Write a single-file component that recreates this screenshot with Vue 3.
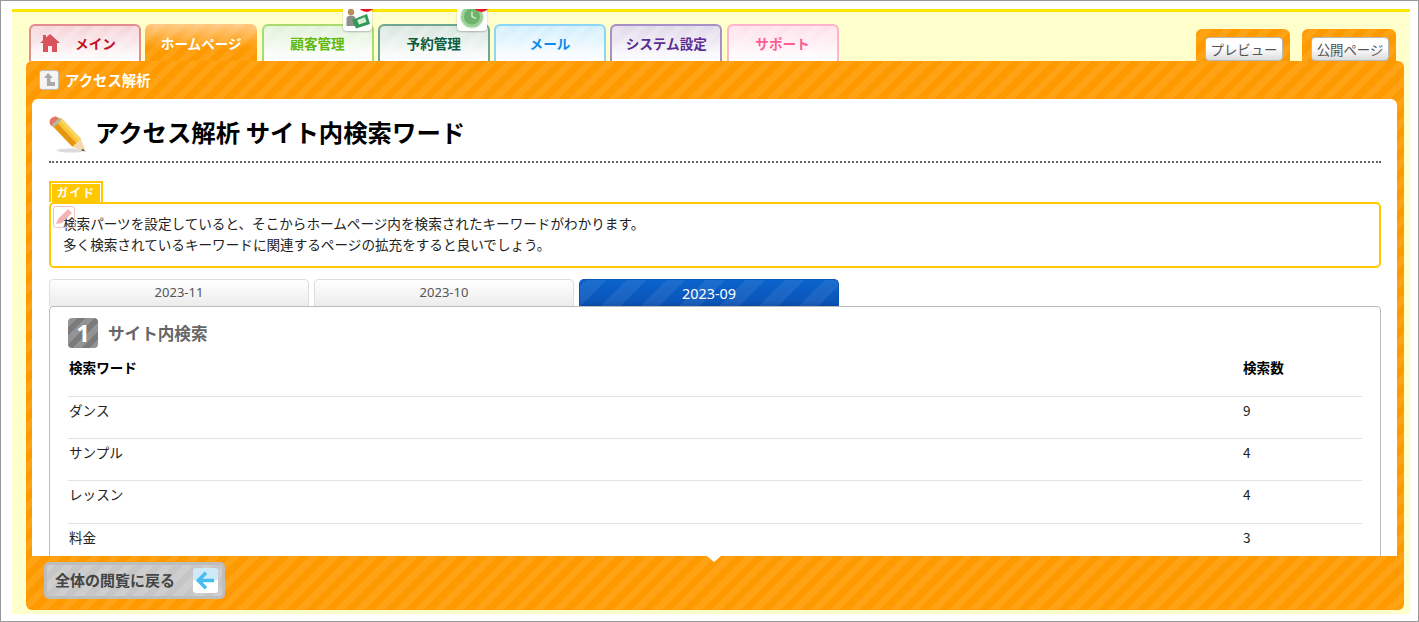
<script setup>
const tabs = [
  { key: 'main', label: 'メイン' },
  { key: 'home', label: 'ホームページ' },
  { key: 'customer', label: '顧客管理' },
  { key: 'reserve', label: '予約管理' },
  { key: 'mail', label: 'メール' },
  { key: 'system', label: 'システム設定' },
  { key: 'support', label: 'サポート' },
]
const months = [
  { label: '2023-11', active: false },
  { label: '2023-10', active: false },
  { label: '2023-09', active: true },
]
const rows = [
  { word: 'ダンス', count: 9 },
  { word: 'サンプル', count: 4 },
  { word: 'レッスン', count: 4 },
  { word: '料金', count: 3 },
]
</script>

<template>
  <div class="frame">
    <div class="page">
      <nav class="nav">
        <div class="tabs">
          <a v-for="t in tabs" :key="t.key" class="tab" :class="'tab-' + t.key">
            <svg v-if="t.key === 'main'" class="home-ico" viewBox="0 0 20 20" width="20" height="20">
              <path fill="#d9535c" d="M10 1 L20 10 L17 10 L17 19 L12 19 L12 13 L8 13 L8 19 L3 19 L3 10 L0 10 L3 7.300 L3 2 L6 2 L6 4.600 Z" />
            </svg>
            <span>{{ t.label }}</span>
            <span v-if="t.key === 'customer'" class="float-ico">
              <svg viewBox="0 0 29 22" width="29" height="22">
                <circle cx="8" cy="3" r="3.200" fill="#b98a5a" />
                <path fill="#8d9089" d="M3.500 17 V10 Q3.500 6.500 8 6.500 Q12.500 6.500 12.500 10 V17 Z" />
                <path fill="#2f9a58" d="M9 11 L24 5 L27 15 L13 19.500 Z" />
                <path fill="#bfe5bd" d="M14 11 L22 8 L23.500 13 L16 15.500 Z" />
                <path stroke="#fff" stroke-width=".8" d="M15 12.500 L22 10 M16 14.300 L23 11.800" />
              </svg>
            </span>
            <span v-if="t.key === 'reserve'" class="float-ico float-ico-clock">
              <svg viewBox="0 0 30 22" width="30" height="22">
                <circle cx="15" cy="7.500" r="11.500" fill="#9bd199" stroke="#d5ecd3" stroke-width="1.200" />
                <circle cx="15" cy="7.500" r="8" fill="#6cb46b" />
                <path d="M15 2.500 V7.500 L19 9.500" fill="none" stroke="#e3f3e2" stroke-width="1.300" />
              </svg>
            </span>
            <i v-if="t.key === 'customer' || t.key === 'reserve'" class="dot"></i>
          </a>
        </div>
        <div class="side-tabs">
          <div class="side-tab"><button class="side-btn">プレビュー</button></div>
          <div class="side-tab"><button class="side-btn">公開ページ</button></div>
        </div>
      </nav>

      <section class="panel">
        <header class="crumb">
          <span class="up-ico">
            <svg viewBox="0 0 18 18" width="18" height="18">
              <path fill="#a9a9a9" d="M8 2 L13 7 L10.500 7 L10.500 11 L15 11 L15 15 L7 15 L7 7 L4 7 Z" />
            </svg>
          </span>
          <span>アクセス解析</span>
        </header>

        <main class="sheet">
          <h1 class="title">
            <svg class="pencil" viewBox="0 0 38 37" width="38" height="37">
              <ellipse cx="22" cy="34.500" rx="14" ry="2" fill="#ccc" opacity=".7" />
              <path fill="#e8950f" d="M3.500 10 L12 2 L32 23 L23.500 31 Z" />
              <path fill="#fbc63a" d="M7.500 6.300 L12 2 L32 23 L27.500 27.200 Z" />
              <path fill="#f9d765" d="M10 4 L12 2 L32 23 L30 25 Z" />
              <path fill="#e5775a" d="M1.500 9 Q-.500 6 1.500 3 Q4 0 7 .5 Q9 1 11 3 L4.500 11 Z" />
              <path fill="#b9b6a8" d="M2.800 8.800 L10.200 1.700 L12.500 3.800 L5 11.200 Z" />
              <path fill="#f3d9ad" d="M23.500 31 L32 23 L36.500 35.500 Z" />
              <path fill="#3c3c3c" d="M33.500 32.800 L36.500 35.500 L32.300 34.200 Z" />
            </svg>
            <span>アクセス解析 サイト内検索ワード</span>
          </h1>

          <div class="guide-tag"><span>ガイド</span></div>
          <div class="guide-box">
            <span class="guide-ico">
              <svg viewBox="0 0 22 22" width="22" height="22">
                <path fill="#f3b3b3" d="M5 13 L15 3 L19 7 L9 17 L3 18 Z" />
              </svg>
            </span>
            <p>検索パーツを設定していると、そこからホームページ内を検索されたキーワードがわかります。</p>
            <p>多く検索されているキーワードに関連するページの拡充をすると良いでしょう。</p>
          </div>

          <div class="months">
            <a v-for="m in months" :key="m.label" class="month" :class="{ active: m.active }">{{ m.label }}</a>
          </div>

          <div class="result">
            <h2 class="heading">
              <span class="num">1</span>
              <span>サイト内検索</span>
            </h2>
            <div class="row row-head">
              <span>検索ワード</span>
              <span>検索数</span>
            </div>
            <div v-for="r in rows" :key="r.word" class="row">
              <span>{{ r.word }}</span>
              <span>{{ r.count }}</span>
            </div>
          </div>
        </main>

        <footer class="foot">
          <i class="notch"></i>
          <a class="back">
            <span>全体の閲覧に戻る</span>
            <span class="back-ico">
              <svg viewBox="0 0 26 26" width="25" height="25">
                <path fill="none" stroke="#45bdf0" stroke-width="3.600" d="M22 13 H6 M13.500 5 L5.500 13 L13.500 21" />
              </svg>
            </span>
          </a>
        </footer>
      </section>
    </div>
  </div>
</template>

<style>
html, body { margin: 0; padding: 0; background: #fff; }
</style>

<style scoped>
.frame {
  width: 1419px;
  height: 622px;
  box-sizing: border-box;
  border: 1px solid #999;
  padding: 8px 8px 7px 11px;
  background: #fff;
  font-family: "Noto Sans CJK JP", "Noto Sans", sans-serif;
  overflow: hidden;
}
.page {
  height: 100%;
  box-sizing: border-box;
  position: relative;
  overflow: hidden;
  background: linear-gradient(#ffe600 3px, #ffffcc 3px);
  padding: 15px 6px 4px 14px;
  display: flex;
  flex-direction: column;
}
.nav {
  height: 37px;
  flex: none;
  display: flex;
  justify-content: space-between;
  align-items: flex-end;
  padding: 0 8px 0 3px;
}
.tabs { display: flex; gap: 4.25px; height: 37px; }
.tab {
  position: relative;
  width: 112px;
  box-sizing: border-box;
  border: 2px solid;
  border-bottom: 0;
  border-radius: 6px 6px 0 0;
  display: flex;
  align-items: center;
  justify-content: center;
  font-size: 13.6px;
  font-weight: 700;
  padding-bottom: 2px;
  --top: #eee;
  background:
    repeating-linear-gradient(-45deg, rgba(255,255,255,0) 0 7px, rgba(255,255,255,.18) 7px 14px),
    linear-gradient(var(--top), #fff);
}
.tab-main { border-color: #e28d90; color: #c4101e; --top: #f5d3d8; gap: 15px; padding-right: 14px; }
.tab-home {
  border-color: transparent;
  color: #fff;
  background:
    repeating-linear-gradient(-45deg, rgba(255,255,255,0) 0 7px, rgba(255,255,255,.08) 7px 14px) border-box,
    linear-gradient(#ffc983, #ff9900 65%) border-box;
}
.tab-customer { border-color: #a9dc6f; color: #62b80a; --top: #e2f2da; }
.tab-reserve { border-color: #6ea78f; color: #0c5c3b; --top: #d8e5df; }
.tab-mail { border-color: #8dd5f6; color: #0b8ae8; --top: #d2eefd; }
.tab-system { border-color: #a88fc7; color: #5b2e92; --top: #e0d8ea; }
.tab-support { border-color: #ffb4ca; color: #ff5b92; --top: #ffe0ea; }
.home-ico { flex: none; }
.float-ico {
  position: absolute;
  right: 0;
  top: -17px;
  width: 29px;
  height: 22px;
  background: #fff;
  border-radius: 0 0 4px 4px;
  box-shadow: 0 1px 2px rgba(0,0,0,.25);
  overflow: hidden;
}
.float-ico svg { display: block; }
.float-ico-clock { right: 1px; width: 30px; }
.dot {
  position: absolute;
  right: -3px;
  top: -31px;
  width: 17px;
  height: 17px;
  border-radius: 50%;
  background: #e8121e;
}
.tab-reserve .dot { right: -2px; }
.side-tabs { display: flex; gap: 12px; }
.side-tab {
  width: 94px;
  height: 32px;
  box-sizing: border-box;
  padding: 8px 0 0 2px;
  display: flex;
  justify-content: center;
  border-radius: 6px 6px 0 0;
  background: repeating-linear-gradient(-45deg, #ff9900 0 7px, #ffa214 7px 14px);
}
.side-btn {
  width: 78px;
  height: 24px;
  box-sizing: border-box;
  padding: 0;
  border: 1px solid #b9b9b9;
  border-radius: 4px;
  background: linear-gradient(#fff, #fff 45%, #dcdcdc);
  color: #555;
  font-family: inherit;
  font-size: 13.4px;
  line-height: 20px;
}
.panel {
  flex: 1;
  min-height: 0;
  display: flex;
  flex-direction: column;
  border-radius: 6px;
  background: repeating-linear-gradient(-45deg, #ff9900 0 7px, #ffa214 7px 14px);
}
.crumb {
  height: 38px;
  flex: none;
  box-sizing: border-box;
  padding: 0 0 1px 13px;
  display: flex;
  align-items: center;
  gap: 6px;
  color: #fff;
  font-size: 14.4px;
  font-weight: 700;
}
.up-ico {
  width: 20px;
  height: 20px;
  box-sizing: border-box;
  border: 1px solid #bcbcbc;
  border-radius: 3px;
  background: #f4f4f4;
  display: flex;
  align-items: center;
  justify-content: center;
}
.sheet {
  flex: 1;
  min-height: 0;
  margin: 0 7px 0 6px;
  padding: 0 16px 0 17px;
  background: #fff;
  border-radius: 6px 6px 0 0;
  overflow: hidden;
}
.title {
  margin: 0;
  height: 64px;
  box-sizing: border-box;
  padding-top: 17px;
  border-bottom: 2px dotted #666;
  display: flex;
  align-items: flex-start;
  gap: 8px;
  font-size: 24.4px;
  font-weight: 700;
  line-height: 32px;
  color: #000;
}
.pencil { flex: none; }
.guide-tag {
  margin-top: 18px;
  width: 54px;
  height: 21px;
  box-sizing: border-box;
  border: 2px solid #ffc800;
  border-bottom: 0;
  padding: 1px 1px 0;
  display: flex;
}
.guide-tag span {
  flex: 1;
  background: #ffc800;
  color: #fff;
  font-size: 11.5px;
  font-weight: 700;
  letter-spacing: 1.5px;
  line-height: 16px;
  text-align: center;
}
.guide-box {
  position: relative;
  height: 66px;
  box-sizing: border-box;
  border: 2px solid #ffc800;
  border-radius: 5px;
  padding: 9px 12px 0;
  font-size: 13.6px;
  line-height: 21px;
  color: #222;
}
.guide-box p { margin: 0; }
.guide-ico {
  position: absolute;
  left: 2px;
  top: 2px;
  width: 22px;
  height: 22px;
  box-sizing: border-box;
  border: 1px solid #f1c4c4;
  border-radius: 3px;
  display: block;
}
.guide-ico svg { display: block; margin: -1px; }
.months { display: flex; gap: 5px; margin-top: 11px; }
.month {
  width: 260px;
  height: 27px;
  box-sizing: border-box;
  border: 1px solid #ddd;
  border-bottom: 0;
  border-radius: 5px 5px 0 0;
  background: linear-gradient(#fff, #ececec);
  color: #555;
  font-family: "Noto Sans", sans-serif;
  font-size: 13px;
  line-height: 25px;
  text-align: center;
}
.month.active {
  border-color: #0a55b8;
  color: #fff;
  font-size: 14.4px;
  line-height: 28px;
  background:
    repeating-linear-gradient(-45deg, rgba(255,255,255,0) 0 14px, rgba(255,255,255,.07) 14px 28px),
    linear-gradient(#0a63cc, #0a56bb 80%, #084aa5);
}
.result {
  border: 1px solid #bbb;
  border-radius: 4px 4px 0 0;
  padding: 11px 18px 0;
}
.heading {
  margin: 0 0 5px;
  display: flex;
  align-items: center;
  gap: 10px;
  font-size: 16.6px;
  font-weight: 700;
  line-height: 30px;
  color: #666;
}
.num {
  width: 30px;
  height: 30px;
  border-radius: 4px;
  background: repeating-linear-gradient(-45deg, #939393 0 6px, #7b7b7b 6px 12px);
  color: #fff;
  font-family: "Noto Sans", sans-serif;
  font-size: 24px;
  font-weight: 700;
  line-height: 30px;
  text-align: center;
}
.row {
  height: 42.4px;
  box-sizing: border-box;
  padding: 3px 0 0 1px;
  border-top: 1px solid #e2e2e2;
  display: grid;
  grid-template-columns: 1174px 1fr;
  font-size: 13.6px;
  line-height: 21px;
  color: #222;
}
.row-head {
  border-top: 0;
  height: 42.6px;
  padding-top: 4px;
  font-weight: 700;
  color: #000;
}
.foot {
  position: relative;
  height: 54px;
  flex: none;
  display: flex;
  align-items: flex-start;
  box-sizing: border-box;
  padding: 6px 0 0 18px;
}
.notch {
  position: absolute;
  left: 681px;
  top: 0;
  width: 0;
  height: 0;
  border: 7px solid transparent;
  border-top: 6px solid #fff;
  border-bottom: 0;
}
.back {
  width: 181px;
  height: 37px;
  box-sizing: border-box;
  border: 3px solid #bdbdbd;
  border-radius: 5px;
  padding: 0 4px 0 8px;
  display: flex;
  align-items: center;
  justify-content: space-between;
  background: repeating-linear-gradient(-45deg, #cecece 0 7px, #c6c6c6 7px 14px);
  color: #444;
  font-size: 15px;
  font-weight: 700;
}
.back > span:first-child { margin-top: -3px; }
.back-ico {
  width: 25px;
  height: 25px;
  border-radius: 3px;
  background: linear-gradient(#cfe9f8 50%, #fff 50%);
}
.back-ico svg { display: block; }
</style>
